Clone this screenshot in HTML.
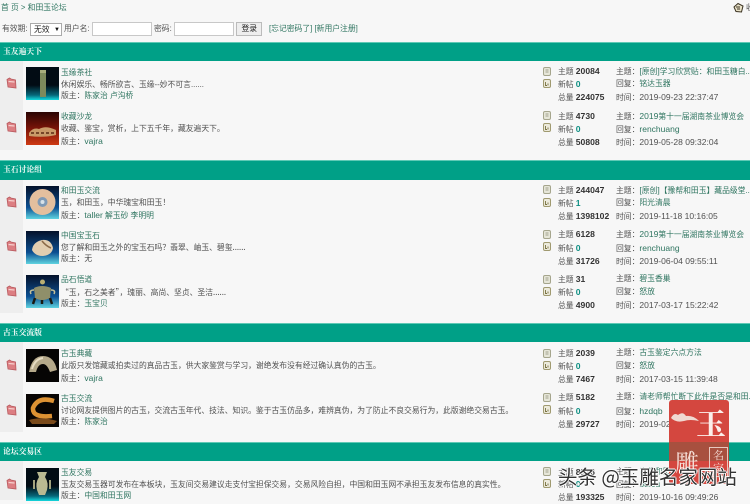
<!DOCTYPE html>
<html><head><meta charset="utf-8"><style>
html,body{margin:0;padding:0}
body{width:750px;height:500px;overflow:hidden;background:#f7f7f7;position:relative;font-family:"Liberation Sans","Noto Sans CJK SC",sans-serif;font-size:7.8px;line-height:12px;color:#505050}
.w{position:absolute;left:0;top:0;width:750px;height:500px;filter:blur(.3px)}
.t{position:absolute;white-space:nowrap}
.g{color:#2f7560}.b{font-weight:bold;color:#333;font-size:8.6px}.n{font-weight:bold;color:#0f8f83;font-size:8.6px}
.l{font-size:8.5px}
.h{position:absolute;left:0;width:750px;background:#00a087;border-top:1px solid #5fc9b5;box-sizing:border-box}
.h b{position:absolute;left:3px;top:3px;color:#f4fbf8;font:bold 7.8px/12px "Liberation Serif","Noto Serif CJK SC",serif}
.s{position:absolute;left:0;width:23px;background:#eeeeee}
svg{position:absolute}
.in{position:absolute;background:#fff;border:1px solid #c8c8c8;box-sizing:border-box}
.c{font-family:"Noto Sans CJK SC",sans-serif}
</style></head><body><div class="w">
<svg width="0" height="0" style="position:absolute"><defs>
<g id="f"><path d="M1 2.500 L3.500 1 L5 2 L9.500 3 L10 11 L2 10 Z" fill="#dc7e82" stroke="#b85a5e" stroke-width=".8"/><path d="M2.500 4.500 L8.500 5" stroke="#f6d0cd" stroke-width="1.200"/></g>
<g id="i1"><rect x=".5" y=".5" width="7" height="8" rx="1.500" fill="#e6e6d8" stroke="#a5a58c"/><path d="M2.500 3h3M2.500 5h3" stroke="#8d8d75" stroke-width=".8"/></g>
<g id="i2"><rect x=".5" y=".5" width="7" height="8" rx="1.500" fill="#eceadb" stroke="#a09a70"/><path d="M2.500 3v3.500h1.500M5 4.500v2" stroke="#77703f" stroke-width=".9" fill="none"/></g>
<linearGradient id="bc" x1="0" y1="0" x2="0" y2="1"><stop offset=".55" stop-color="#020c14"/><stop offset=".85" stop-color="#06677a"/><stop offset="1" stop-color="#14d8de"/></linearGradient>
<linearGradient id="bb" x1="0" y1="0" x2="0" y2="1"><stop offset="0" stop-color="#04112a"/><stop offset=".65" stop-color="#0c4f92"/><stop offset="1" stop-color="#5fd3e0"/></linearGradient>
<linearGradient id="br" x1="0" y1="0" x2="0" y2="1"><stop offset="0" stop-color="#2a0503"/><stop offset=".5" stop-color="#7a1408"/><stop offset="1" stop-color="#cf3a14"/></linearGradient>
</defs></svg>

<div class="t g" style="left:1px;top:2px">首 页 &gt; 和田玉论坛</div>
<svg style="left:733px;top:2px" width="11" height="11"><path d="M1 5 L5 1.500 L10 4 L8.500 10 L3 9.500 Z" fill="#e9e2c8" stroke="#3a3222"/><path d="M3 5h4M4 7h3" stroke="#3a3222"/></svg>
<div class="t" style="left:746px;top:2px">收</div>

<div class="t" style="left:2px;top:23px">有效期:</div>
<div class="in" style="left:30px;top:23px;width:32px;height:13px;border-color:#aaa"><span class="t" style="left:3px;top:0;color:#222">无效</span><span class="t" style="left:23px;top:0;font-size:6px;color:#111">▼</span></div>
<div class="t" style="left:64px;top:23px">用户名:</div>
<div class="in" style="left:92px;top:22px;width:60px;height:14px"></div>
<div class="t" style="left:154px;top:23px">密码:</div>
<div class="in" style="left:174px;top:22px;width:60px;height:14px"></div>
<div class="in" style="left:236px;top:22px;width:26px;height:14px;background:#eeeeee;border-color:#bbb"><span class="t" style="left:4.500px;top:0;color:#222">登录</span></div>
<div class="t g" style="left:269px;top:23px">[忘记密码了] [新用户注册]</div>

<div class="h" style="top:42px;height:19px"><b>玉友遍天下</b></div>
<div class="h" style="top:160px;height:20px"><b>玉石讨论组</b></div>
<div class="h" style="top:323px;height:19px"><b>古玉交流版</b></div>
<div class="h" style="top:442px;height:19px"><b>论坛交易区</b></div>
<div class="s" style="top:61px;height:89px"></div>
<div class="s" style="top:180px;height:133px"></div>
<div class="s" style="top:342px;height:90px"></div>
<div class="s" style="top:461px;height:39px"></div>

<!-- folders -->
<svg style="left:6px;top:77px" width="11" height="12"><use href="#f"/></svg>
<svg style="left:6px;top:121px" width="11" height="12"><use href="#f"/></svg>
<svg style="left:6px;top:196px" width="11" height="12"><use href="#f"/></svg>
<svg style="left:6px;top:240px" width="11" height="12"><use href="#f"/></svg>
<svg style="left:6px;top:285px" width="11" height="12"><use href="#f"/></svg>
<svg style="left:6px;top:359px" width="11" height="12"><use href="#f"/></svg>
<svg style="left:6px;top:404px" width="11" height="12"><use href="#f"/></svg>
<svg style="left:6px;top:478px" width="11" height="12"><use href="#f"/></svg>

<!-- thumbs -->
<svg style="left:26px;top:67px" width="33" height="33"><rect width="33" height="33" fill="url(#bc)"/><rect x="14" y="3" width="6" height="27" fill="#7d8a5c"/><rect x="14" y="3" width="6" height="3" fill="#a7ad7c"/></svg>
<svg style="left:26px;top:112px" width="33" height="33"><rect width="33" height="33" fill="url(#br)"/><path d="M3 21 Q7 15 13 17 Q20 13 30 18 L30 23 Q18 26 3 24Z" fill="#c99a68"/><path d="M5 21h23" stroke="#5a2a12" stroke-width="1.500" stroke-dasharray="3 2"/></svg>
<svg style="left:26px;top:186px" width="33" height="33"><rect width="33" height="33" fill="url(#bb)"/><circle cx="16.500" cy="16" r="13" fill="#e3bf9e"/><circle cx="16.500" cy="16" r="5" fill="#7f9ab5"/><circle cx="16.500" cy="16" r="2" fill="#d8e2e8"/></svg>
<svg style="left:26px;top:231px" width="33" height="33"><rect width="33" height="33" fill="url(#bb)"/><path d="M6 19 Q7 11 16 9 Q25 8 27 17 Q26 24 17 25 Q9 25 6 19Z" fill="#e2ceb0"/><path d="M16 10 Q20 15 25 17" stroke="#8a6a48" stroke-width="1.500" fill="none"/></svg>
<svg style="left:26px;top:275px" width="33" height="33"><rect width="33" height="33" fill="url(#bb)"/><path d="M8 13 Q16 9 25 13 L24 23 Q16 27 9 23Z" fill="#8f8f6a"/><circle cx="16.500" cy="7" r="2.500" fill="#b9ae72"/><path d="M9 23l-2 6M24 23l2 6M16 25v4" stroke="#1a1a12" stroke-width="2.500"/><path d="M8 15 Q3 15 5 19M25 15 Q30 15 28 19" stroke="#c4c09a" stroke-width="1.500" fill="none"/></svg>
<svg style="left:26px;top:349px" width="33" height="33"><rect width="33" height="33" fill="#060504"/><path d="M3 23 Q6 7 17 7 Q28 7 31 21 L24 23 Q21 15 17 15 Q12 15 10 23Z" fill="#b5a98a"/><path d="M6 20 Q9 10 17 9" stroke="#e6dcc2" stroke-width="2" fill="none"/></svg>
<svg style="left:26px;top:394px" width="33" height="33"><rect width="33" height="33" fill="#080503"/><path d="M28 7 Q12 2 7 14 Q6 24 26 22" stroke="#dd9233" stroke-width="4.500" fill="none"/><path d="M3 26 Q16 22 31 27 L28 30 L6 30Z" fill="#7a4a1a"/></svg>
<svg style="left:26px;top:468px" width="33" height="33"><rect width="33" height="33" fill="url(#bc)"/><path d="M11 4h10l-2 5q4 6 2 13l-2 5h-6l-2-5q-2-7 2-13Z" fill="#b9b992"/><path d="M8 12v9M24 12v9" stroke="#a3a37e" stroke-width="2"/></svg>

<!-- left text -->
<div class="t g" style="left:61px;top:67px">玉缘茶社</div><div class="t" style="left:61px;top:79px">休闲娱乐、畅所欲言、玉缘--妙不可言......</div><div class="t" style="left:61px;top:90px">版主：<span class="g">陈家治 卢沟桥</span></div>
<div class="t g" style="left:61px;top:111px">收藏沙龙</div><div class="t c" style="left:61px;top:123px">收藏、鉴宝，赏析，上下五千年，藏友遍天下。</div><div class="t" style="left:61px;top:135px">版主：<span class="g l">vajra</span></div>

<div class="t g" style="left:61px;top:185px">和田玉交流</div><div class="t c" style="left:61px;top:197px">玉，和田玉，中华瑰宝和田玉！</div><div class="t" style="left:61px;top:209px">版主：<span class="g"><span class="l">taller</span> 解玉砂 李明明</span></div>
<div class="t g" style="left:61px;top:230px">中国宝玉石</div><div class="t c" style="left:61px;top:242px">您了解和田玉之外的宝玉石吗？翡翠、岫玉、碧玺......</div><div class="t" style="left:61px;top:253px">版主：无</div>
<div class="t g" style="left:61px;top:274px">品石悟道</div><div class="t c" style="left:61px;top:287px">“玉，石之美者”，瑰丽、高尚、坚贞、圣洁......</div><div class="t" style="left:61px;top:298px">版主：<span class="g">玉宝贝</span></div>

<div class="t g" style="left:61px;top:348px">古玉典藏</div><div class="t c" style="left:61px;top:360px">此版只发馆藏或拍卖过的真品古玉，供大家鉴赏与学习，谢绝发布没有经过确认真伪的古玉。</div><div class="t" style="left:61px;top:372px">版主：<span class="g l">vajra</span></div>
<div class="t g" style="left:61px;top:393px">古玉交流</div><div class="t c" style="left:61px;top:405px">讨论网友提供图片的古玉，交流古玉年代、技法、知识。鉴于古玉仿品多，难辨真伪，为了防止不良交易行为，此版谢绝交易古玉。</div><div class="t" style="left:61px;top:416px">版主：<span class="g">陈家治</span></div>

<div class="t g" style="left:61px;top:467px">玉友交易</div><div class="t c" style="left:61px;top:479px">玉友交易玉器可发布在本板块，玉友间交易建议走支付宝担保交易，交易风险自担，中国和田玉网不承担玉友发布信息的真实性。</div><div class="t" style="left:61px;top:490px">版主：<span class="g">中国和田玉网</span></div>

<!-- stat icons -->
<svg style="left:543px;top:67px" width="9" height="9"><use href="#i1"/></svg><svg style="left:543px;top:79px" width="9" height="9"><use href="#i2"/></svg>
<svg style="left:543px;top:111px" width="9" height="9"><use href="#i1"/></svg><svg style="left:543px;top:123px" width="9" height="9"><use href="#i2"/></svg>
<svg style="left:543px;top:185px" width="9" height="9"><use href="#i1"/></svg><svg style="left:543px;top:198px" width="9" height="9"><use href="#i2"/></svg>
<svg style="left:543px;top:230px" width="9" height="9"><use href="#i1"/></svg><svg style="left:543px;top:242px" width="9" height="9"><use href="#i2"/></svg>
<svg style="left:543px;top:275px" width="9" height="9"><use href="#i1"/></svg><svg style="left:543px;top:287px" width="9" height="9"><use href="#i2"/></svg>
<svg style="left:543px;top:349px" width="9" height="9"><use href="#i1"/></svg><svg style="left:543px;top:361px" width="9" height="9"><use href="#i2"/></svg>
<svg style="left:543px;top:393px" width="9" height="9"><use href="#i1"/></svg><svg style="left:543px;top:405px" width="9" height="9"><use href="#i2"/></svg>
<svg style="left:543px;top:467px" width="9" height="9"><use href="#i1"/></svg><svg style="left:543px;top:479px" width="9" height="9"><use href="#i2"/></svg>

<!-- stats -->
<div class="t" style="left:558px;top:65px">主题 <span class="b">20084</span></div><div class="t" style="left:558px;top:78px">新帖 <span class="n">0</span></div><div class="t" style="left:558px;top:91px">总量 <span class="b">224075</span></div>
<div class="t" style="left:616px;top:65px">主题：<span class="g"><span class="l">[</span>原创<span class="l">]</span>学习欣赏贴：和田玉糖白...</span></div><div class="t" style="left:616px;top:78px">回复：<span class="g">铭达玉器</span></div><div class="t" style="left:616px;top:91px">时间：<span class="l">2019-09-23 22:37:47</span></div>

<div class="t" style="left:558px;top:110px">主题 <span class="b">4730</span></div><div class="t" style="left:558px;top:123px">新帖 <span class="n">0</span></div><div class="t" style="left:558px;top:136px">总量 <span class="b">50808</span></div>
<div class="t" style="left:616px;top:110px">主题：<span class="g"><span class="l">2019</span>第十一届湖南茶业博览会</span></div><div class="t" style="left:616px;top:123px">回复：<span class="g l">renchuang</span></div><div class="t" style="left:616px;top:136px">时间：<span class="l">2019-05-28 09:32:04</span></div>

<div class="t" style="left:558px;top:184px">主题 <span class="b">244047</span></div><div class="t" style="left:558px;top:197px">新帖 <span class="n">1</span></div><div class="t" style="left:558px;top:210px">总量 <span class="b">1398102</span></div>
<div class="t" style="left:616px;top:184px">主题：<span class="g"><span class="l">[</span>原创<span class="l">]</span>【豫帮和田玉】藏品级堂...</span></div><div class="t" style="left:616px;top:197px">回复：<span class="g">阳光清晨</span></div><div class="t" style="left:616px;top:210px">时间：<span class="l">2019-11-18 10:16:05</span></div>

<div class="t" style="left:558px;top:228px">主题 <span class="b">6128</span></div><div class="t" style="left:558px;top:242px">新帖 <span class="n">0</span></div><div class="t" style="left:558px;top:255px">总量 <span class="b">31726</span></div>
<div class="t" style="left:616px;top:228px">主题：<span class="g"><span class="l">2019</span>第十一届湖南茶业博览会</span></div><div class="t" style="left:616px;top:242px">回复：<span class="g l">renchuang</span></div><div class="t" style="left:616px;top:255px">时间：<span class="l">2019-06-04 09:55:11</span></div>

<div class="t" style="left:558px;top:273px">主题 <span class="b">31</span></div><div class="t" style="left:558px;top:286px">新帖 <span class="n">0</span></div><div class="t" style="left:558px;top:299px">总量 <span class="b">4900</span></div>
<div class="t" style="left:616px;top:273px">主题：<span class="g">碧玉香巢</span></div><div class="t" style="left:616px;top:286px">回复：<span class="g">怒放</span></div><div class="t" style="left:616px;top:299px">时间：<span class="l">2017-03-17 15:22:42</span></div>

<div class="t" style="left:558px;top:347px">主题 <span class="b">2039</span></div><div class="t" style="left:558px;top:360px">新帖 <span class="n">0</span></div><div class="t" style="left:558px;top:373px">总量 <span class="b">7467</span></div>
<div class="t" style="left:616px;top:347px">主题：<span class="g">古玉鉴定六点方法</span></div><div class="t" style="left:616px;top:360px">回复：<span class="g">怒放</span></div><div class="t" style="left:616px;top:373px">时间：<span class="l">2017-03-15 11:39:48</span></div>

<div class="t" style="left:558px;top:391px">主题 <span class="b">5182</span></div><div class="t" style="left:558px;top:405px">新帖 <span class="n">0</span></div><div class="t" style="left:558px;top:418px">总量 <span class="b">29727</span></div>
<div class="t" style="left:616px;top:391px">主题：<span class="g">请老师帮忙断下此件是否是和田...</span></div><div class="t" style="left:616px;top:405px">回复：<span class="g l">hzdqb</span></div><div class="t" style="left:616px;top:418px">时间：<span class="l">2019-02-23 11:20:36</span></div>

<div class="t" style="left:558px;top:466px">主题 <span class="b">8816</span></div><div class="t" style="left:558px;top:478px">新帖 <span class="n">0</span></div><div class="t" style="left:558px;top:491px">总量 <span class="b">193325</span></div>
<div class="t" style="left:616px;top:466px">主题：<span class="g">出售和田玉</span></div><div class="t" style="left:616px;top:478px">回复：<span class="g l">bdlou</span></div><div class="t" style="left:616px;top:491px">时间：<span class="l">2019-10-16 09:49:26</span></div>
</div>

<!-- watermark -->
<div style="position:absolute;left:669px;top:400px;width:60px;height:84px;background:#d4473f;border-radius:3px"></div>
<div style="position:absolute;left:669px;top:442px;width:60px;height:19px;background:#a8503f"></div>
<svg style="left:670px;top:410px" width="30" height="14"><path d="M1 8 Q4 2 8 5 Q13 1 16 6 Q23 5 29 11 Q20 9 14 11 Q6 13 1 8Z" fill="#f0d8d0"/></svg>
<div class="t" style="left:696px;top:403px;font:bold 30px/38px 'Noto Serif CJK SC',serif;color:#fbeeea">玉</div>
<div class="t" style="left:675px;top:446px;font:24px/30px 'Noto Serif CJK SC',serif;color:#f5ddd6">雕</div>
<div style="position:absolute;left:709px;top:447px;width:19px;height:30px;border:1px solid #e8c8c0;box-sizing:border-box"></div>
<div class="t" style="left:713px;top:449px;width:11px;white-space:normal;font:11px/13px 'Noto Serif CJK SC',serif;color:#f5ddd6">名家</div>
<div class="t" style="left:558px;top:464px;font:19.500px/23px 'Noto Sans CJK SC',sans-serif;color:#333;text-shadow:-1px 0 #fff,1px 0 #fff,0 -1px #fff,0 1px #fff">头条 @玉雕名家网站</div>
</body></html>
